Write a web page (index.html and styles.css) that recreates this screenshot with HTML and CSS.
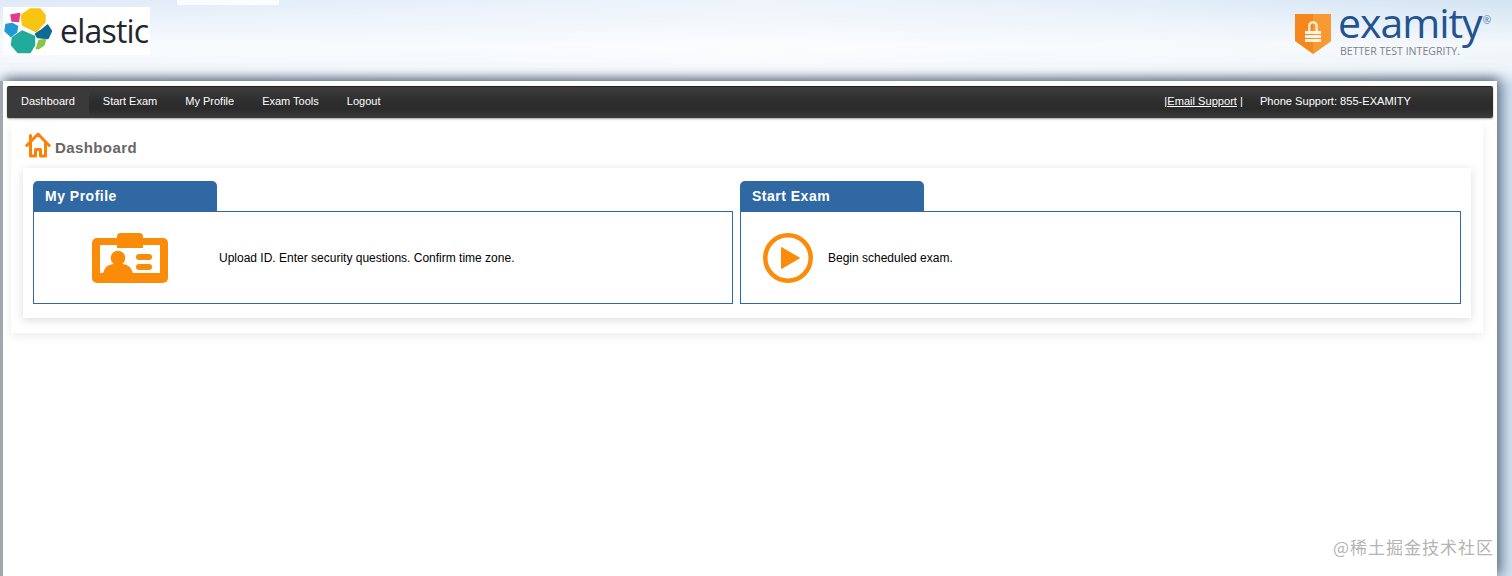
FILE: index.html
```html
<!DOCTYPE html>
<html lang="en">
<head>
<meta charset="utf-8">
<title>Examity Dashboard</title>
<link rel="stylesheet" href="styles.css">
</head>
<body>
<header class="banner">
  <div class="elastic">
    <svg class="elastic-mark" viewBox="0 0 48 48" width="48" height="48" aria-hidden="true">
      <g stroke-width="1.500" stroke-linejoin="round">
        <path fill="#f9c513" stroke="#f9c513" d="M26 2 L36 2 L41 8 L41 15 L32 24.500 L18.500 18 L17.500 8 Z"/>
        <path fill="#de3f8d" stroke="#de3f8d" d="M7 8 L15.500 6.500 L14.500 14.500 L8 14 Z"/>
        <path fill="#1f9ad7" stroke="#1f9ad7" d="M2 17.500 L8 16.500 L13.500 19.500 L12.500 25 L7 29.500 L1 24 Z"/>
        <path fill="#0f6a93" stroke="#0f6a93" d="M43.500 18 L47.500 24 L44 31.500 L33.500 30.500 L31.500 27 L37 23.500 Z"/>
        <path fill="#22aa9d" stroke="#22aa9d" d="M18 24 L30.500 29.500 L30.500 38 L26 45.500 L14 45.500 L7.500 38 L8.500 30.500 Z"/>
        <path fill="#8cc444" stroke="#8cc444" d="M35 33.500 L41.500 32.500 L40 38 L35 41.500 L32.500 41.500 Z"/>
      </g>
    </svg>
    <span class="elastic-word">elastic</span>
  </div>
  <div class="examity">
    <svg class="shield" viewBox="0 0 36 40" width="36" height="40" aria-hidden="true">
      <path fill="#f5881c" d="M0 0 H36 V27 L18 40 L0 27 Z"/>
      <path fill="#f79a33" d="M18 0 H36 V27 L18 40 Z"/>
      <path fill="#fde8cf" d="M13 17 V12 a5 5 0 0 1 10 0 V17 H20.500 V12 a2.500 2.500 0 0 0 -5 0 V17 Z"/>
      <rect x="10" y="17" width="16" height="3" fill="#fff3e4"/>
      <rect x="10" y="21" width="16" height="3" fill="#fff3e4"/>
      <rect x="10" y="25" width="16" height="3" fill="#fff3e4"/>
    </svg>
    <div class="examity-brand">
      <div class="examity-name">examity<span class="reg">®</span></div>
      <div class="examity-tag">BETTER TEST INTEGRITY.</div>
    </div>
  </div>
</header>
<main class="window">
  <nav class="nav">
    <ul class="nav-list">
      <li class="nav-item"><a class="nav-link is-active" href="#">Dashboard</a></li>
      <li class="nav-item"><a class="nav-link" href="#">Start Exam</a></li>
      <li class="nav-item"><a class="nav-link" href="#">My Profile</a></li>
      <li class="nav-item"><a class="nav-link" href="#">Exam Tools</a></li>
      <li class="nav-item"><a class="nav-link" href="#">Logout</a></li>
    </ul>
    <div class="support">
      <span>|<a class="support-link" href="#">Email Support</a> |</span>
      <span>Phone Support: 855-EXAMITY</span>
    </div>
  </nav>
  <section class="page">
    <h1 class="page-title">
      <svg class="home" viewBox="0 0 26 26" width="26" height="26" aria-hidden="true">
        <path fill="none" stroke="#f98307" stroke-width="3" stroke-linejoin="round" stroke-linecap="round" d="M1.800 13.500 L13 2 L24.200 13.500 M5.500 10.500 V24 H10.500 V17.500 H15.500 V24 H20.500 V10.500 M5.500 3.500 V8"/>
      </svg>
      <span class="page-title-text">Dashboard</span>
    </h1>
    <div class="panels">
      <article class="panel panel-profile">
        <h2 class="tab">My Profile</h2>
        <div class="panel-body">
          <svg class="icon-id" viewBox="0 0 76 50" width="76" height="50" aria-hidden="true">
            <rect x="0" y="5" width="76" height="45" rx="5" fill="#fb8c0a"/>
            <rect x="25" y="0" width="26" height="15" rx="3.500" fill="#fb8c0a"/>
            <path d="M8 12 H25 V15 H51 V12 H68 V40 H8 Z" fill="#fff"/>
            <circle cx="26" cy="25" r="7.300" fill="#fb8c0a"/>
            <path d="M11 40 Q13 32 21 31 H31 Q39 32 41 40 Z" fill="#fb8c0a"/>
            <rect x="44" y="21" width="16" height="6" rx="3" fill="#fb8c0a"/>
            <rect x="44" y="31" width="16" height="6" rx="3" fill="#fb8c0a"/>
          </svg>
          <p class="panel-text">Upload ID. Enter security questions. Confirm time zone.</p>
        </div>
      </article>
      <article class="panel panel-exam">
        <h2 class="tab">Start Exam</h2>
        <div class="panel-body">
          <svg class="icon-play" viewBox="0 0 50 50" width="50" height="50" aria-hidden="true">
            <circle cx="25" cy="25" r="22.700" fill="none" stroke="#fb8c0a" stroke-width="4.500"/>
            <path d="M18.500 14.500 L36.500 25 L18.500 35.500 Z" fill="#fb8c0a" stroke="#fb8c0a" stroke-linejoin="round"/>
          </svg>
          <p class="panel-text">Begin scheduled exam.</p>
        </div>
      </article>
    </div>
  </section>
  <div class="watermark">@稀土掘金技术社区</div>
</main>
</body>
</html>
```
FILE: styles.css
```css
* { box-sizing: border-box; }
html, body { margin: 0; height: 100%; }
body {
  width: 1512px;
  height: 576px;
  overflow: hidden;
  font-family: "Liberation Sans", Arial, sans-serif;
  background:
    linear-gradient(180deg, rgba(255,255,255,0) 0, rgba(255,255,255,.75) 45px, rgba(255,255,255,.6) 70px, rgba(255,255,255,0) 85px),
    linear-gradient(90deg, #dfeaf7 0%, #e4eef9 20%, #eef4fb 50%, #e4eef8 75%, #d3e3f2 100%);
  display: flex;
  flex-direction: column;
}
.banner {
  height: 81px;
  flex: none;
  display: flex;
  justify-content: space-between;
  align-items: flex-start;
  position: relative;
}
.banner::before {
  content: "";
  position: absolute;
  left: 177px;
  top: 0;
  width: 102px;
  height: 5px;
  background: #fbfcfe;
}
.elastic {
  margin: 7px 0 0 3px;
  width: 147px;
  height: 48px;
  background: #fff;
  display: flex;
  align-items: center;
  gap: 8px;
  overflow: hidden;
}
.elastic-mark { flex: none; margin-left: 1px; }
.elastic-word {
  font-family: "Open Sans", sans-serif;
  font-size: 32px;
  font-weight: 500;
  letter-spacing: -0.800px;
  color: #23262c;
  line-height: 48px;
}
.examity {
  display: flex;
  margin: 0 21px 0 0;
  gap: 7px;
  align-items: flex-start;
}
.shield { margin-top: 14px; }
.examity-brand { display: flex; flex-direction: column; }
.examity-name {
  font-family: "Open Sans", sans-serif;
  font-size: 41px;
  font-weight: 500;
  line-height: 44px;
  letter-spacing: -1px;
  color: #23538f;
  height: 45px;
  white-space: nowrap;
}
.reg { font-size: 10px; line-height: 0; vertical-align: 14px; color: #4f7aa8; letter-spacing: 0; margin-left: 1px; }
.examity-tag {
  font-family: "Open Sans", sans-serif;
  font-size: 10.600px;
  line-height: 12px;
  color: #7b8289;
  margin-left: 2px;
}
.window {
  flex: 1;
  width: 1494px;
  margin-left: 3px;
  padding: 5px 4px 0 4px;
  background: #fff;
  box-shadow: -3px 0 0 0 #a3a6aa, 0 -3px 10px rgba(60,70,85,.6), 6px 0 12px rgba(70,95,125,.55);
  position: relative;
  display: flex;
  flex-direction: column;
  align-items: stretch;
}
.nav {
  height: 32px;
  flex: none;
  display: flex;
  justify-content: space-between;
  align-items: stretch;
  background: linear-gradient(180deg, #3d3d3d 0%, #2e2e2e 45%, #2b2b2b 70%, #3b3b3b 100%);
  border-top: 1px solid #222;
  border-radius: 2px;
  font-size: 11px;
  color: #fff;
  box-shadow: 0 1px 2px rgba(0,0,0,.35);
}
.nav-list { list-style: none; margin: 0; padding: 0; display: flex; }
.nav-item { display: flex; }
.nav-link {
  display: flex;
  align-items: center;
  padding: 0 14px 4px;
  color: #fff;
  text-decoration: none;
}
.nav-link.is-active { background: #3a3a3a; border-radius: 2px 0 0 2px; }
.support {
  display: flex;
  align-items: center;
  gap: 17px;
  padding: 0 82px 4px 0;
  font-size: 11.100px;
}
.support-link { color: #fff; }
.page {
  margin: 4px 10px 0 4px;
  padding: 0 12px 15px;
  background: #fff;
  box-shadow: 0 3px 10px rgba(0,0,0,.08);
  height: 211px;
  flex: none;
  display: flex;
  flex-direction: column;
}
.page-title {
  margin: 0;
  height: 46px;
  display: flex;
  align-items: center;
  gap: 4px;
  font-size: 15px;
  font-weight: bold;
  color: #666;
  letter-spacing: 0.400px;
  padding-left: 2px;
  flex: none;
}
.page-title-text { margin-top: 4px; }
.home { flex: none; }
.panels {
  flex: 1;
  padding: 13px 10px 14px;
  display: grid;
  grid-template-columns: 700px 721px;
  gap: 7px;
  background: #fff;
  box-shadow: 0 2px 9px rgba(0,0,0,.14);
  width: 1448px;
}
.panel { display: flex; flex-direction: column; min-width: 0; }
.tab {
  margin: 0;
  width: 184px;
  height: 30px;
  flex: none;
  padding: 0 0 0 12px;
  display: flex;
  align-items: center;
  background: #2f68a3;
  color: #fff;
  font-size: 14px;
  font-weight: bold;
  letter-spacing: 0.500px;
  border-radius: 5px 5px 0 0;
}
.panel-body {
  flex: 1;
  display: flex;
  align-items: center;
  border: 1px solid #2f68a3;
  background: #fff;
}
.panel-text { margin: 0; font-size: 12px; color: #000; }
.icon-id { margin-left: 58px; flex: none; }
.panel-profile .panel-text { margin-left: 51px; }
.icon-play { margin-left: 22px; flex: none; }
.panel-exam .panel-text { margin-left: 15px; }
.watermark {
  position: absolute;
  right: 3px;
  bottom: 19px;
  font-family: "Noto Sans CJK SC", sans-serif;
  font-size: 17px;
  line-height: 20px;
  color: #b4b4b4;
  letter-spacing: 1px;
}
```
